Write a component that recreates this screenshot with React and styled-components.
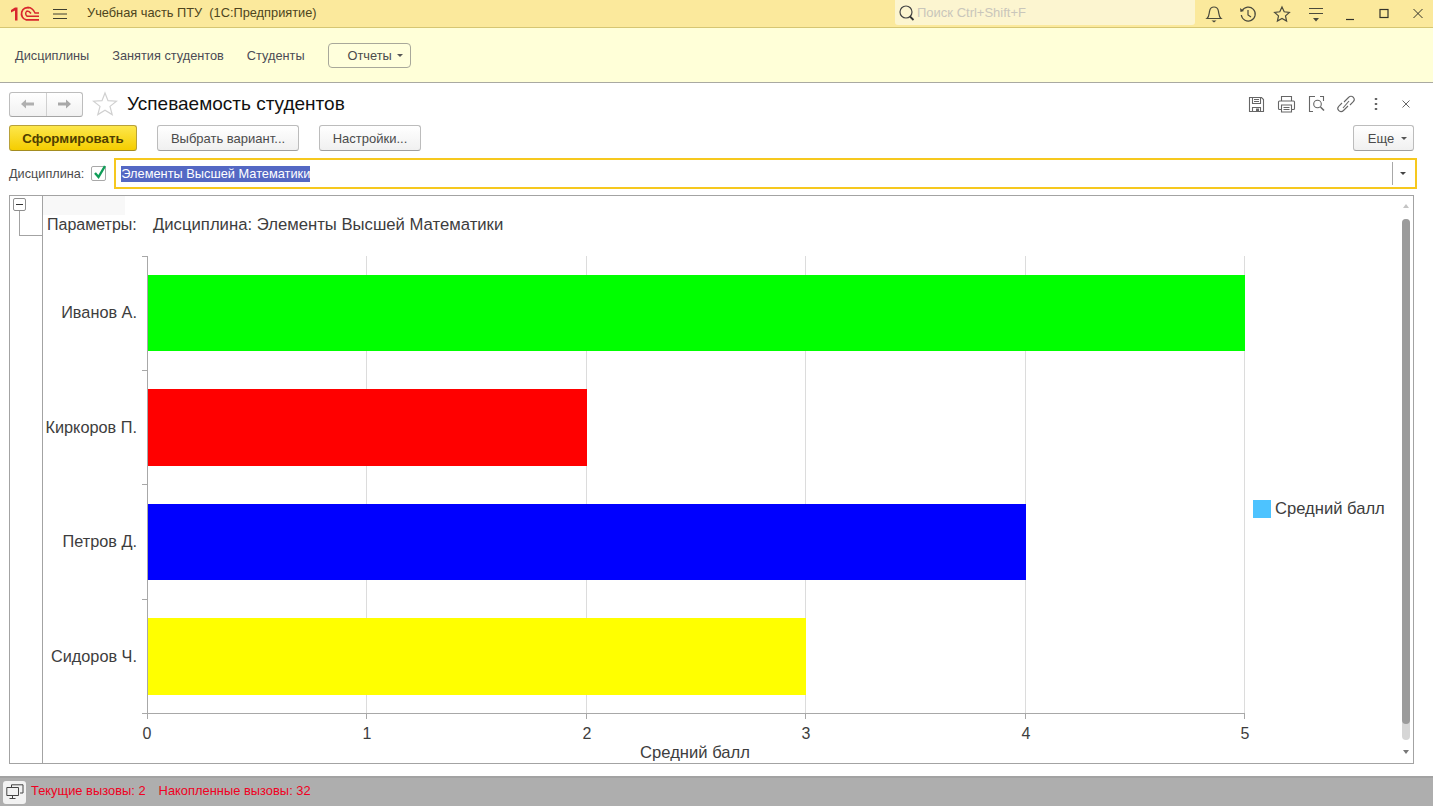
import React from 'react';
import styled, { createGlobalStyle } from 'styled-components';

const GlobalStyle = createGlobalStyle`
  html, body {
    margin: 0;
    padding: 0;
    height: 100%;
    overflow: hidden;
    font-family: "Liberation Sans", Arial, sans-serif;
  }
  * { box-sizing: border-box; }
`;

const Page = styled.div`
  width: 1433px;
  height: 806px;
  display: flex;
  flex-direction: column;
  background: #fff;
  color: #4b4b4b;
`;

// Top yellow title bar
const TitleBar = styled.header`
  height: 28px;
  flex: none;
  display: flex;
  align-items: center;
  overflow: hidden;
  background: #fbe99c;
  border-bottom: 1px solid #d6c672;
`;

const Logo = styled.svg`
  width: 30px;
  height: 16px;
  flex: none;
  margin-left: 9px;
`;

const Burger = styled.svg`
  width: 16px;
  height: 12px;
  flex: none;
  margin-left: 13px;
`;

const AppName = styled.span`
  margin: 0 0 2px 19px;
  width: 808px;
  flex: none;
  font-size: 12.8px;
  color: #4d4520;
  white-space: pre;
`;

const Search = styled.div`
  width: 300px;
  height: 25px;
  flex: none;
  margin-bottom: 2px;
  display: flex;
  align-items: center;
  gap: 2px;
  padding-left: 3px;
  background: #fcf5d0;
  border-radius: 0 0 3px 3px;
  font-size: 13px;
  color: #c9c6bb;
`;

const TopIcons = styled.div`
  display: flex;
  flex: none;
  align-items: center;
  margin-left: 2px;
`;

const TopIcon = styled.svg`
  width: 34px;
  height: 20px;
  flex: none;
`;

// Section panel
const SectionPanel = styled.nav`
  height: 55px;
  flex: none;
  display: flex;
  align-items: center;
  padding: 1px 0 0 15px;
  background: #ffffd8;
  border-bottom: 1px solid #a9a9a2;
`;

const SectionLink = styled.a`
  font-size: 12.75px;
  color: #4b4b55;
  margin-right: 23px;
`;

const ReportsButton = styled.button`
  width: 83px;
  height: 25px;
  padding: 0 0 0 19px;
  display: flex;
  align-items: center;
  gap: 5px;
  font: 12.8px "Liberation Sans", Arial, sans-serif;
  color: #4b4b4b;
  background: #ffffdc;
  border: 1px solid #a8a89a;
  border-radius: 4px;
`;

const Caret = styled.i`
  width: 0;
  height: 0;
  border-left: 3px solid transparent;
  border-right: 3px solid transparent;
  border-top: 3px solid ${({ $color }) => $color || '#555'};
`;

// Form
const Form = styled.main`
  flex: 1;
  min-height: 0;
  display: flex;
  flex-direction: column;
  padding: 8px 19px 12px 9px;
`;

const FormHeader = styled.div`
  height: 26px;
  flex: none;
  display: flex;
  align-items: center;
`;

const NavGroup = styled.div`
  width: 74px;
  height: 25px;
  display: flex;
  border: 1px solid #bdbdbd;
  border-bottom-color: #a5a5a5;
  border-radius: 3px;
  background: linear-gradient(#fff, #f1f1f1);
`;

const NavButton = styled.span`
  flex: 1;
  display: flex;
  align-items: center;
  justify-content: center;
  & + & { border-left: 1px solid #d0d0d0; }
`;

const FavStar = styled.svg`
  width: 26px;
  height: 26px;
  margin-left: 9px;
`;

const Title = styled.h1`
  margin: 0 0 0 9px;
  font-size: 19px;
  font-weight: 400;
  color: #111;
  flex: 1;
`;

const HeadIcons = styled.div`
  display: flex;
  align-items: center;
  margin-right: -7px;
`;

const HeadIcon = styled.svg`
  width: 30px;
  height: 20px;
  flex: none;
`;

const CommandBar = styled.div`
  margin-top: 8px;
  height: 26px;
  flex: none;
  display: flex;
  align-items: center;
`;

const Button = styled.button`
  height: 26px;
  width: ${({ $w }) => $w}px;
  margin-right: ${({ $mr }) => $mr || 0}px;
  padding: 0;
  display: flex;
  align-items: center;
  justify-content: center;
  font: ${({ $primary }) => ($primary ? '700 13.3px' : '400 13px')} "Liberation Sans", Arial, sans-serif;
  color: ${({ $primary }) => ($primary ? '#4f3f00' : '#4b4b4b')};
  background: ${({ $primary }) =>
    $primary ? 'linear-gradient(#fde74c, #f5cd00)' : 'linear-gradient(#fff, #f0f0f0)'};
  border: 1px solid ${({ $primary }) => ($primary ? '#b8a13a' : '#bcbcbc')};
  border-bottom-color: ${({ $primary }) => ($primary ? '#a38c20' : '#9f9f9f')};
  border-radius: 3px;
`;

const MoreButton = styled(Button)`
  margin-left: auto;
  padding-left: 8px;
  gap: 7px;
`;

const FilterRow = styled.div`
  margin-top: 7px;
  height: 31px;
  flex: none;
  display: flex;
  align-items: center;
  margin-right: -3px;
`;

const FilterLabel = styled.label`
  font-size: 12.7px;
  color: #4b4b4b;
`;

const CheckBox = styled.span`
  width: 15px;
  height: 15px;
  margin-left: 7px;
  border: 1px solid #a8a8a8;
  border-radius: 2px;
  position: relative;
  flex: none;
`;

const CheckMark = styled.svg`
  position: absolute;
  left: 0;
  top: -3px;
  width: 15px;
  height: 17px;
`;

const Field = styled.div`
  margin-left: 8px;
  flex: 1;
  height: 31px;
  display: flex;
  align-items: center;
  padding-left: 5px;
  border: 2px solid #f6c81e;
`;

const FieldValue = styled.span`
  font-size: 12.8px;
  line-height: 16px;
  color: #fff;
  background: #5468c4;
`;

const FieldDrop = styled.span`
  margin-left: auto;
  width: 23px;
  height: 23px;
  padding-right: 3px;
  display: flex;
  align-items: center;
  justify-content: center;
  border-left: 1px solid #a8a8a8;
`;

// Report area
const Report = styled.section`
  margin-top: 6px;
  flex: 1;
  min-height: 0;
  display: flex;
  border: 1px solid #a3a3a3;
  position: relative;
`;

const Gutter = styled.div`
  width: 33px;
  flex: none;
  border-right: 1px solid #a3a3a3;
  position: relative;
`;

const GroupBox = styled.span`
  position: absolute;
  left: 3px;
  top: 2px;
  width: 13px;
  height: 13px;
  background: #fff;
  border: 1px solid #8f8f8f;
  border-radius: 2px;
  &::after {
    content: '';
    position: absolute;
    left: 2px;
    right: 2px;
    top: 5px;
    height: 1px;
    background: #333;
  }
`;

const GroupLine = styled.span`
  position: absolute;
  left: 9px;
  top: 15px;
  width: 24px;
  height: 25px;
  border-left: 1px solid #a3a3a3;
  border-bottom: 1px solid #a3a3a3;
`;

const ReportBody = styled.div`
  flex: 1;
  min-width: 0;
  display: flex;
  flex-direction: column;
  position: relative;
`;

const HeaderCell = styled.span`
  position: absolute;
  left: 0;
  top: 0;
  width: 82px;
  height: 19px;
  background: #f8f8f8;
`;

const ParamsRow = styled.div`
  height: 44px;
  flex: none;
  display: flex;
  padding: 20px 0 0 4px;
  font-size: 16.7px;
  line-height: 18px;
  color: #3d3d3d;
  position: relative;
`;

const ParamLabel = styled.span`
  width: 106px;
  flex: none;
  font-size: 16px;
`;

const Chart = styled.svg`
  display: block;
  flex: 1;
  width: 100%;
  min-height: 0;
`;

const ScrollColumn = styled.div`
  position: absolute;
  right: 3px;
  top: 0;
  bottom: 0;
  width: 8px;
`;

const ScrollArrow = styled.i`
  position: absolute;
  left: 1px;
  width: 0;
  height: 0;
  border-left: 3px solid transparent;
  border-right: 3px solid transparent;
  ${({ $down }) =>
    $down
      ? 'bottom: 9px; border-top: 4px solid #777;'
      : 'top: 8px; border-bottom: 4px solid #c4c4c4;'}
`;

const ScrollTrack = styled.div`
  position: absolute;
  top: 23px;
  left: 0;
  width: 8px;
  height: 521px;
  border-radius: 4px;
  background: #d6d6d6;
`;

const ScrollThumb = styled.div`
  width: 8px;
  height: 505px;
  border-radius: 4px;
  background: #9b9b9b;
`;

// Status bar
const StatusBar = styled.footer`
  height: 30px;
  flex: none;
  display: flex;
  align-items: center;
  padding-left: 3px;
  background: #aeaeae;
  border-top: 2px solid #a2a2a2;
  font-size: 12.9px;
  color: #f00022;
`;

const WindowsButton = styled.span`
  width: 23px;
  height: 23px;
  display: flex;
  align-items: center;
  justify-content: center;
  background: #f2f2f2;
  border-radius: 3px;
  margin-right: 5px;
`;

const StatusText = styled.span`
  margin: 0 13px 4px 0;
`;

const bars = [
  { name: 'Иванов А.', top: 275, bottom: 351, score: 5, color: '#00ff00', labelY: 317.5 },
  { name: 'Киркоров П.', top: 389, bottom: 466, score: 2, color: '#ff0000', labelY: 433 },
  { name: 'Петров Д.', top: 504, bottom: 580, score: 4, color: '#0000ff', labelY: 547 },
  { name: 'Сидоров Ч.', top: 618, bottom: 695, score: 3, color: '#ffff00', labelY: 662 },
];

const X0 = 147;
const TICKS = [147, 367, 587, 806, 1026, 1245];
const AXIS_TOP = 256;
const AXIS_BOTTOM = 713;

function ReportChart() {
  return (
    <Chart viewBox="43 240 1370 523" preserveAspectRatio="xMinYMin meet" fontFamily="Liberation Sans, Arial, sans-serif">
      {TICKS.slice(1).map((x) => (
        <line key={x} x1={x - 0.5} x2={x - 0.5} y1={AXIS_TOP} y2={AXIS_BOTTOM} stroke="#dcdcdc" />
      ))}
      {bars.map((b) => (
        <rect key={b.name} x={X0 + 1} y={b.top} width={TICKS[b.score] - X0 - 1} height={b.bottom - b.top} fill={b.color} />
      ))}
      <line x1="147.5" x2="147.5" y1={AXIS_TOP} y2={AXIS_BOTTOM + 6} stroke="#a8a8a8" />
      <line x1="142" x2="1245" y1={AXIS_BOTTOM + 0.5} y2={AXIS_BOTTOM + 0.5} stroke="#a8a8a8" />
      {[256, 370, 484, 599].map((y) => (
        <line key={y} x1="142" x2="147" y1={y + 0.5} y2={y + 0.5} stroke="#a8a8a8" />
      ))}
      {TICKS.slice(1).map((x) => (
        <line key={x} x1={x - 0.5} x2={x - 0.5} y1={AXIS_BOTTOM} y2={AXIS_BOTTOM + 6} stroke="#a8a8a8" />
      ))}
      {bars.map((b) => (
        <text key={b.name} x="137" y={b.labelY} textAnchor="end" fontSize="16.3" fill="#3d3d3d">
          {b.name}
        </text>
      ))}
      {TICKS.map((x, v) => (
        <text key={x} x={x} y="739" textAnchor="middle" fontSize="16" fill="#3d3d3d">
          {v}
        </text>
      ))}
      <text x="695" y="758" textAnchor="middle" fontSize="16.6" fill="#3d3d3d">Средний балл</text>
      <rect x="1253" y="500" width="18" height="18" fill="#4dc3ff" />
      <text x="1275" y="514" fontSize="16.6" fill="#3d3d3d">Средний балл</text>
    </Chart>
  );
}

const stroke = { fill: 'none', stroke: '#4a4a3c', strokeWidth: 1.2 };
const grey = { fill: 'none', stroke: '#666', strokeWidth: 1.1 };

export default function App() {
  return (
    <Page>
      <GlobalStyle />
      <TitleBar>
        <Logo viewBox="0 0 30 16">
          <path d="M2 4 L6 1.5 H8.5 V14.5 H6 V4.6 L2 6.6 Z" fill="#d8262c" />
          <path d="M20.5 1.8 A6.2 6.2 0 0 0 17 13.8 H30" fill="none" stroke="#d8262c" strokeWidth="1.7" />
          <path d="M18.5 1.6 C22 1.2 24.5 4 26 7 H30 M30 10.2 H18 A3.2 3.2 0 0 1 18 5 C20 5 21 6 22 7.5" fill="none" stroke="#d8262c" strokeWidth="1.5" />
        </Logo>
        <Burger viewBox="0 0 16 12">
          <path d="M1 1.5 H15 M1 6 H15 M1 10.5 H15" stroke="#3f3f30" strokeWidth="1" />
        </Burger>
        <AppName>Учебная часть ПТУ  (1С:Предприятие)</AppName>
        <Search>
          <svg width="17" height="18" viewBox="0 0 17 18">
            <circle cx="8" cy="8" r="6" fill="none" stroke="#444" strokeWidth="1.2" />
            <path d="M12 12.5 L15.5 16" stroke="#333" strokeWidth="1.8" />
          </svg>
          Поиск Ctrl+Shift+F
        </Search>
        <TopIcons>
          <TopIcon viewBox="0 0 34 20">
            <path d="M10 14.5 C12.5 12.5 12 9 12.7 6.5 C13.3 4 15 3 17 3 C19 3 20.7 4 21.3 6.5 C22 9 21.5 12.5 24 14.5 Z" {...stroke} />
            <path d="M14.5 16.5 H19.5 L17 18.5 Z" fill="#4a4a3c" />
          </TopIcon>
          <TopIcon viewBox="0 0 34 20">
            <path d="M11.2 6.5 A7 7 0 1 1 10.3 11" {...stroke} />
            <path d="M9 4 L9.5 8 L13 7 Z" fill="#4a4a3c" />
            <path d="M17 6 V11 L20 13" {...stroke} />
          </TopIcon>
          <TopIcon viewBox="0 0 34 20">
            <path d="M17 3 L19.2 7.8 L24.4 8.4 L20.5 11.9 L21.6 17 L17 14.4 L12.4 17 L13.5 11.9 L9.6 8.4 L14.8 7.8 Z" {...stroke} />
          </TopIcon>
          <TopIcon viewBox="0 0 34 20">
            <path d="M10 4.5 H24 M10 9.5 H24" {...stroke} />
            <path d="M14 14 H20 L17 17.5 Z" fill="#4a4a3c" />
          </TopIcon>
          <TopIcon viewBox="0 0 34 20">
            <path d="M13 15.5 H21" stroke="#33332a" strokeWidth="1.2" />
          </TopIcon>
          <TopIcon viewBox="0 0 34 20">
            <rect x="13" y="5.5" width="8" height="8" fill="none" stroke="#33332a" strokeWidth="1.2" />
          </TopIcon>
          <TopIcon viewBox="0 0 34 20">
            <path d="M12.5 5 L21.5 14 M21.5 5 L12.5 14" stroke="#33332a" strokeWidth="1" />
          </TopIcon>
        </TopIcons>
      </TitleBar>

      <SectionPanel>
        <SectionLink>Дисциплины</SectionLink>
        <SectionLink>Занятия студентов</SectionLink>
        <SectionLink>Студенты</SectionLink>
        <ReportsButton>
          Отчеты <Caret />
        </ReportsButton>
      </SectionPanel>

      <Form>
        <FormHeader>
          <NavGroup>
            <NavButton>
              <svg width="16" height="12" viewBox="0 0 16 12">
                <path d="M1 6 L6 1.5 V4.5 H14 V7.5 H6 V10.5 Z" fill="#b0b0b0" />
              </svg>
            </NavButton>
            <NavButton>
              <svg width="16" height="12" viewBox="0 0 16 12">
                <path d="M15 6 L10 1.5 V4.5 H2 V7.5 H10 V10.5 Z" fill="#a8a8a8" />
              </svg>
            </NavButton>
          </NavGroup>
          <FavStar viewBox="0 0 26 26">
            <path d="M13 2 L16 9.6 L24.5 10.2 L18 15.4 L20.2 23.6 L13 19.2 L5.8 23.6 L8 15.4 L1.5 10.2 L10 9.6 Z" fill="none" stroke="#d0d0d0" strokeWidth="1.2" />
          </FavStar>
          <Title>Успеваемость студентов</Title>
          <HeadIcons>
            <HeadIcon viewBox="0 0 30 20">
              <path d="M8.5 3.5 H20.5 L22.5 5.5 V17.5 H8.5 Z M11.5 3.5 V9.5 H19.5 V3.5 M11.5 17.5 V13.5 H19.5 V17.5 M13 5.5 H18 M13 7.5 H18" {...grey} />
              <rect x="15" y="14.5" width="3" height="3" fill="#666" />
            </HeadIcon>
            <HeadIcon viewBox="0 0 30 20">
              <path d="M10.5 7 V2.5 H20.5 V7 M10.5 15.5 H8.5 Q7.5 15.5 7.5 14.5 V8 Q7.5 7 8.5 7 H22.5 Q23.5 7 23.5 8 V14.5 Q23.5 15.5 22.5 15.5 H20.5 M10.5 11 H20.5 V18 H10.5 Z M12.5 13.5 H18.5 M12.5 15.5 H18.5" {...grey} />
            </HeadIcon>
            <HeadIcon viewBox="0 0 30 20">
              <path d="M14 2.5 H8.5 V17.5 H12 M22.5 7 V2.5 H19" {...grey} />
              <circle cx="16.5" cy="10" r="3.8" {...grey} />
              <path d="M19.5 13 L23 16.5" stroke="#666" strokeWidth="1.6" />
            </HeadIcon>
            <HeadIcon viewBox="0 0 30 20">
              <path d="M13 8 L17.5 3.5 C19 2 21 2 22.5 3.5 C23.5 4.8 23.5 6.5 22.3 7.7 L19 11 M17 12 L12.5 16.5 C11 18 9 18 7.8 16.7 C6.5 15.3 6.5 13.5 7.7 12.3 L11 9 M12 14 L18 7" {...grey} />
            </HeadIcon>
            <HeadIcon viewBox="0 0 30 20">
              <path d="M15 4 V6 M15 9 V11 M15 14 V16" stroke="#666" strokeWidth="2.4" />
            </HeadIcon>
            <HeadIcon viewBox="0 0 30 20">
              <path d="M11.5 6.5 L18.5 13.5 M18.5 6.5 L11.5 13.5" stroke="#666" strokeWidth="1" />
            </HeadIcon>
          </HeadIcons>
        </FormHeader>

        <CommandBar>
          <Button $primary $w={128} $mr={20}>Сформировать</Button>
          <Button $w={142} $mr={20}>Выбрать вариант...</Button>
          <Button $w={102}>Настройки...</Button>
          <MoreButton $w={61}>
            Еще <Caret />
          </MoreButton>
        </CommandBar>

        <FilterRow>
          <FilterLabel>Дисциплина:</FilterLabel>
          <CheckBox>
            <CheckMark viewBox="0 0 15 17">
              <path d="M3 9 L6.5 13 L13 2" fill="none" stroke="#0f9d58" strokeWidth="2.4" />
            </CheckMark>
          </CheckBox>
          <Field>
            <FieldValue>Элементы Высшей Математики</FieldValue>
            <FieldDrop>
              <Caret $color="#444" />
            </FieldDrop>
          </Field>
        </FilterRow>

        <Report>
          <Gutter>
            <GroupBox />
            <GroupLine />
          </Gutter>
          <ReportBody>
            <HeaderCell />
            <ParamsRow>
              <ParamLabel>Параметры:</ParamLabel>
              <span>Дисциплина: Элементы Высшей Математики</span>
            </ParamsRow>
            <ReportChart />
          </ReportBody>
          <ScrollColumn>
            <ScrollArrow />
            <ScrollTrack>
              <ScrollThumb />
            </ScrollTrack>
            <ScrollArrow $down />
          </ScrollColumn>
        </Report>
      </Form>

      <StatusBar>
        <WindowsButton>
          <svg width="18" height="16" viewBox="0 0 18 16">
            <path d="M5.5 3.5 V0.8 H17 V9 H14 M0.8 3.5 H12.5 V11.5 H0.8 Z M6.5 11.5 V14.5 M3.5 14.5 H9.5" fill="none" stroke="#444" strokeWidth="1" />
          </svg>
        </WindowsButton>
        <StatusText>Текущие вызовы: 2</StatusText>
        <StatusText>Накопленные вызовы: 32</StatusText>
      </StatusBar>
    </Page>
  );
}
